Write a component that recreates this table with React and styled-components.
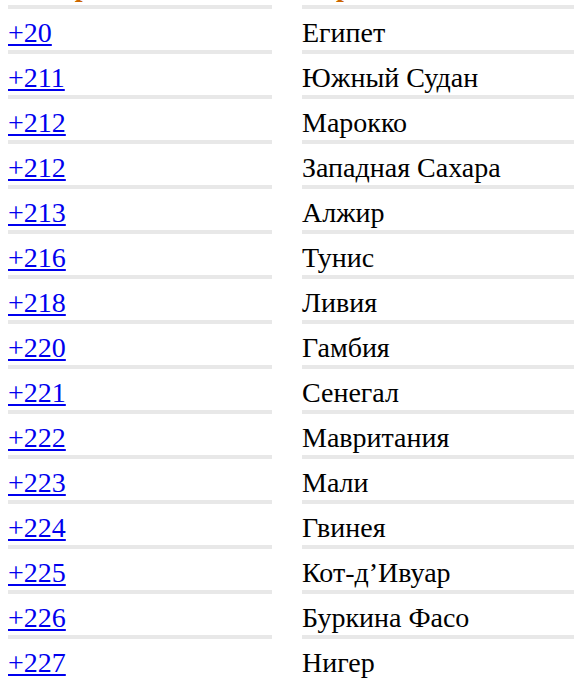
import React from "react";
import styled, { createGlobalStyle } from "styled-components";

const Global = createGlobalStyle`
  html, body { margin: 0; padding: 0; overflow: hidden; background: #fff; }
  body { font-family: "Liberation Serif", "Times New Roman", serif; }
`;

const Page = styled.div`
  padding-left: 8px;
`;

const Table = styled.div`
  display: grid;
  grid-template-columns: 264px 272px;
  column-gap: 30px;
  margin-top: -36px;
`;

const Cell = styled.div`
  box-sizing: border-box;
  height: 45px;
  padding-top: ${(p) => (p.$head ? "7px" : "8px")};
  border-bottom: 4px solid #e8e8e8;
  font-size: 28px;
  line-height: 32px;
  color: ${(p) => (p.$head ? "#cc6600" : "#000")};
  font-weight: ${(p) => (p.$head ? "bold" : "normal")};
  white-space: nowrap;
`;

const CodeLink = styled.a`
  color: #0000ee;
  text-decoration: underline;
`;

const rows = [
  ["+20", "Египет"],
  ["+211", "Южный Судан"],
  ["+212", "Марокко"],
  ["+212", "Западная Сахара"],
  ["+213", "Алжир"],
  ["+216", "Тунис"],
  ["+218", "Ливия"],
  ["+220", "Гамбия"],
  ["+221", "Сенегал"],
  ["+222", "Мавритания"],
  ["+223", "Мали"],
  ["+224", "Гвинея"],
  ["+225", "Кот-д’Ивуар"],
  ["+226", "Буркина Фасо"],
  ["+227", "Нигер"],
];

export default function App() {
  return (
    <Page>
      <Global />
      <Table>
        <Cell $head>Номер</Cell>
        <Cell $head>Страна</Cell>
        {rows.map(([code, name], i) => (
          <React.Fragment key={i}>
            <Cell>
              <CodeLink href="#">{code}</CodeLink>
            </Cell>
            <Cell>{name}</Cell>
          </React.Fragment>
        ))}
      </Table>
    </Page>
  );
}
